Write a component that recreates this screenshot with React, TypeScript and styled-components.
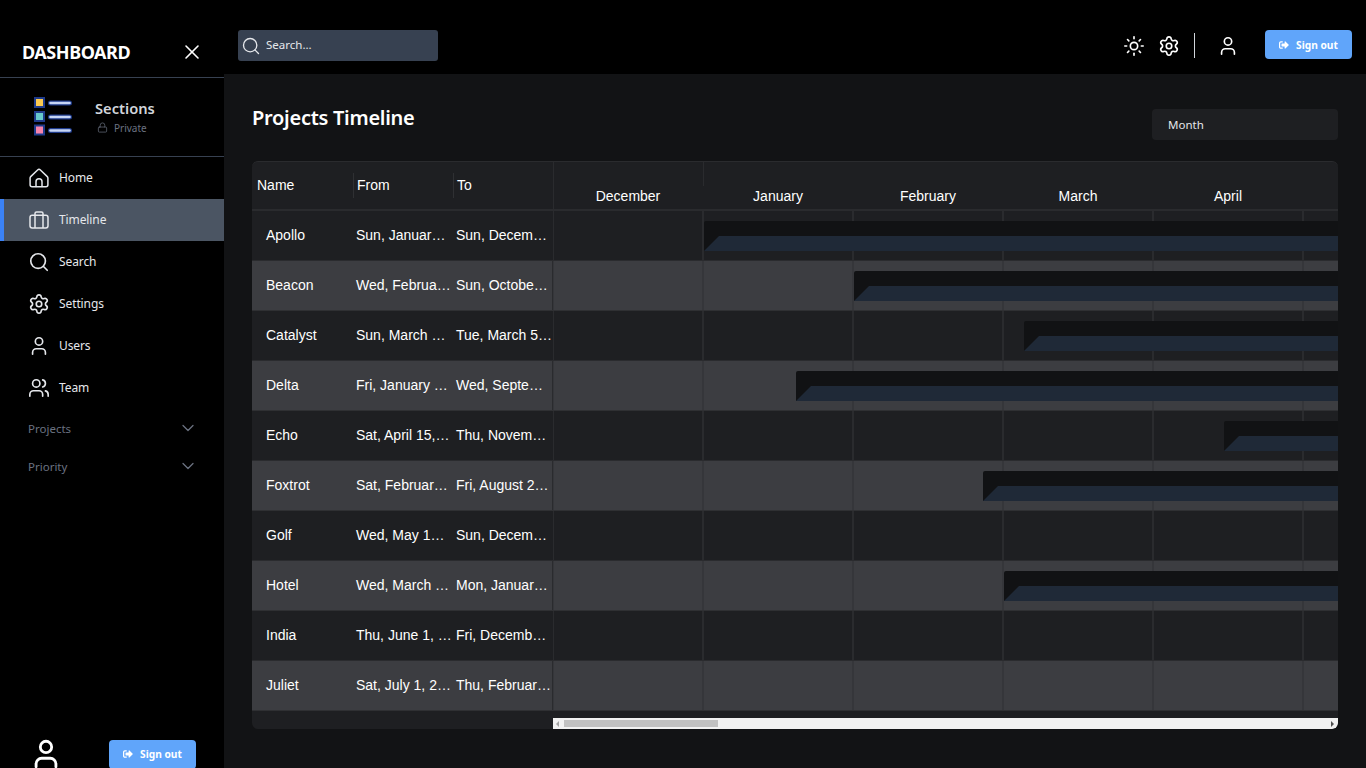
import React from "react";
import styled, { createGlobalStyle } from "styled-components";
import { Search, Settings, User, Users, Sun, X, ChevronDown, Lock } from "lucide-react";
import { FaSignOutAlt } from "react-icons/fa";

const Global = createGlobalStyle`
  html, body { margin: 0; padding: 0; height: 100%; background: #000; overflow: hidden; }
  * { box-sizing: border-box; }
`;

const UI_FONT = `"Noto Sans", "Open Sans", sans-serif`;
const TABLE_FONT = `"Liberation Sans", Arial, sans-serif`;

const Page = styled.div`
  display: flex;
  width: 1366px;
  height: 768px;
  overflow: hidden;
  font-family: ${UI_FONT};
`;

const Sidebar = styled.aside`
  width: 224px;
  height: 768px;
  flex: none;
  display: flex;
  flex-direction: column;
  background: #000;
  overflow: hidden;
`;

const Brand = styled.div`
  height: 78px;
  flex: none;
  display: flex;
  align-items: center;
  justify-content: space-between;
  padding: 27px 20px 0 22px;
  border-bottom: 1px solid #374151;
  color: #fff;
`;

const BrandName = styled.div`
  font-size: 18px;
  font-weight: 700;
  letter-spacing: -0.45px;
`;

const Sections = styled.div`
  height: 79px;
  flex: none;
  display: flex;
  align-items: center;
  gap: 21px;
  padding: 0 0 0 34px;
  border-bottom: 1px solid #374151;
`;

const SectionTitle = styled.div`
  font-size: 14.7px;
  font-weight: 600;
  line-height: 20px;
  margin-top: -1px;
  color: #d1d5db;
`;

const SectionSub = styled.div`
  display: flex;
  align-items: center;
  gap: 6px;
  margin: 2px 0 0 2px;
  font-size: 10px;
  line-height: 16px;
  color: #6b7280;
`;

const Nav = styled.nav`
  flex: 1;
  display: flex;
  flex-direction: column;
`;

const NavItem = styled.div<{ $active?: boolean }>`
  height: 42px;
  flex: none;
  display: flex;
  align-items: center;
  gap: 9px;
  padding-left: ${(p) => (p.$active ? 24 : 28)}px;
  border-left: ${(p) => (p.$active ? "4px solid #3b82f6" : "none")};
  background: ${(p) => (p.$active ? "#4b5563" : "transparent")};
  color: #e5e7eb;
  font-size: 12px;
  letter-spacing: -0.1px;
  svg { flex: none; }
`;

const NavLabel = styled.span`
  margin-top: -2px;
`;

const NavGroup = styled.div`
  height: 38px;
  flex: none;
  display: flex;
  align-items: center;
  justify-content: space-between;
  padding: 0 26px 0 28px;
  color: #6b7280;
  font-size: 11.5px;
`;

const SideFooter = styled.div`
  height: 28px;
  flex: none;
  display: flex;
  justify-content: space-between;
  padding: 0 28px 0 29px;
  color: #fff;
`;

const AvatarSlot = styled.div`
  margin-top: -3px;
`;

const SignOut = styled.button`
  width: 87px;
  height: 29px;
  flex: none;
  display: flex;
  align-items: center;
  justify-content: center;
  gap: 7px;
  border: none;
  border-radius: 4px;
  background: #60a5fa;
  color: #fff;
  font-family: ${UI_FONT};
  font-size: 10.2px;
  font-weight: 700;
  padding: 0 0 2px;
`;

const TopSignOut = styled(SignOut)`
  margin-top: -2px;
  padding: 0;
`;

const Right = styled.div`
  flex: 1;
  min-width: 0;
  display: flex;
  flex-direction: column;
`;

const Topbar = styled.header`
  height: 74px;
  flex: none;
  display: flex;
  align-items: center;
  justify-content: space-between;
  padding: 17px 14px 0 14px;
  background: #000;
  color: #fff;
`;

const SearchBox = styled.div`
  width: 200px;
  height: 31px;
  display: flex;
  align-items: center;
  gap: 5px;
  padding-left: 3px;
  background: #374151;
  border-radius: 3px;
  color: #e5e7eb;
  font-size: 11.5px;
`;

const SearchLabel = styled.span`
  margin-top: -2px;
`;

const TopActions = styled.div`
  display: flex;
  align-items: center;
`;

const TopIcon = styled.div<{ $gap: number }>`
  width: 22px;
  height: 22px;
  margin-right: ${(p) => p.$gap}px;
  display: flex;
  justify-content: center;
`;

const Divider = styled.div`
  width: 1px;
  height: 25px;
  margin-right: 22px;
  background: #d1d5db;
`;

const Main = styled.main`
  flex: 1;
  display: flex;
  flex-direction: column;
  padding: 0 28px;
  background: #121315;
`;

const TitleRow = styled.div`
  height: 87px;
  flex: none;
  display: flex;
  align-items: flex-start;
  justify-content: space-between;
`;

const Title = styled.h1`
  margin: 30px 0 0;
  font-size: 20px;
  line-height: 27px;
  font-weight: 600;
  letter-spacing: -0.28px;
  color: #fff;
`;

const MonthSelect = styled.div`
  width: 186px;
  height: 31px;
  margin-top: 35px;
  display: flex;
  align-items: center;
  padding-left: 16px;
  background: #1e1f22;
  border-radius: 4px;
  color: #e5e7eb;
  font-size: 11.5px;
`;

const Table = styled.section`
  height: 568px;
  flex: none;
  display: flex;
  flex-direction: column;
  background: #1e1f22;
  border-top: 1px solid #2a2b2e;
  border-radius: 6px;
  overflow: hidden;
  font-family: ${TABLE_FONT};
  font-size: 14px;
  color: #fff;
`;

const HeaderRow = styled.div`
  height: 49px;
  flex: none;
  display: flex;
  border-bottom: 2px solid #2a2b2e;
`;

const HeadCell = styled.div<{ $first?: boolean }>`
  width: ${(p) => (p.$first ? 101 : 100)}px;
  flex: none;
  align-self: center;
  height: 25px;
  margin-top: -1px;
  display: flex;
  align-items: center;
  padding-left: ${(p) => (p.$first ? 5 : 3)}px;
  border-left: ${(p) => (p.$first ? "none" : "1px solid #2f3033")};
`;

const MonthStrip = styled.div`
  flex: 1;
  display: flex;
  overflow: hidden;
  box-shadow: inset 1px 0 0 #2a2b2e;
`;

const MonthCell = styled.div<{ $tick?: boolean }>`
  width: 150px;
  flex: none;
  position: relative;
  display: flex;
  align-items: flex-end;
  justify-content: center;
  padding-bottom: 5px;
  &::before {
    content: "";
    display: ${(p) => (p.$tick ? "block" : "none")};
    position: absolute;
    left: 0;
    top: 0;
    width: 1px;
    height: 24px;
    background: #2a2b2e;
  }
`;

const Row = styled.div<{ $alt: boolean }>`
  height: 50px;
  flex: none;
  display: flex;
  background: ${(p) => (p.$alt ? "#3c3d41" : "#1e1f22")};
  border-bottom: 1px solid ${(p) => (p.$alt ? "#2f3033" : "#2a2b2e")};
`;

const NameCell = styled.div`
  width: 101px;
  flex: none;
  display: flex;
  align-items: center;
  padding: 0 0 2px 14px;
`;

const DateCell = styled.div`
  width: 100px;
  flex: none;
  padding: 0 1px 0 3px;
  margin-bottom: 2px;
  align-self: center;
  white-space: nowrap;
  overflow: hidden;
  text-overflow: ellipsis;
`;

const Track = styled.div<{ $alt: boolean }>`
  flex: 1;
  position: relative;
  display: flex;
  overflow: hidden;
  box-shadow: ${(p) => (p.$alt ? "-1px 0 0 #2a2b2e" : "none")};
  --grid: ${(p) => (p.$alt ? "#35363a" : "#2a2b2e")};
`;

const GridCol = styled.div`
  width: 150px;
  flex: none;
  border-left: 1px solid var(--grid);
  border-right: 1px solid var(--grid);
`;

const Bar = styled.div<{ $left: number }>`
  position: absolute;
  top: 10px;
  left: ${(p) => p.$left}px;
  right: 0;
  height: 30px;
  background: #111214;
  border-top-left-radius: 2px;
  &::after {
    content: "";
    position: absolute;
    left: 0;
    right: 0;
    bottom: 0;
    height: 15px;
    background: #1f2937;
    clip-path: polygon(15px 0, 100% 0, 100% 100%, 0 100%);
  }
`;

const ScrollRow = styled.div`
  flex: 1;
  display: flex;
  justify-content: flex-end;
  align-items: flex-end;
`;

const Scrollbar = styled.div`
  width: 785px;
  height: 11px;
  position: relative;
  display: flex;
  align-items: center;
  justify-content: space-between;
  padding: 0 4px 0 3px;
  background: #f1f1f1;
  border-bottom-right-radius: 5px;
`;

const Thumb = styled.div`
  position: absolute;
  left: 11px;
  top: 2px;
  width: 154px;
  height: 7px;
  background: #c1c1c1;
`;

const Arrow = styled.div<{ $dir: "left" | "right" }>`
  width: 0;
  height: 0;
  border-top: 3px solid transparent;
  border-bottom: 3px solid transparent;
  ${(p) =>
    p.$dir === "left"
      ? "border-right: 3px solid #a3a3a3;"
      : "border-left: 3px solid #505050;"}
`;

const HomeIcon = () => (
  <svg width="22" height="22" viewBox="-1 -1 22 22" fill="none" stroke="currentColor" strokeWidth="1.5" strokeLinejoin="round" strokeLinecap="round">
    <path d="M1.7 8.6 8.6 2a2 2 0 0 1 2.8 0l6.9 6.6c.4.4.6.9.6 1.4v6.7a2 2 0 0 1-2 2H3.1a2 2 0 0 1-2-2V10c0-.5.2-1 .6-1.4Z" />
    <path d="M7 18.6v-4.9a3 3 0 0 1 6 0v4.9" />
  </svg>
);

const CaseIcon = () => (
  <svg width="22" height="22" viewBox="-1 -1 22 22" fill="none" stroke="currentColor" strokeWidth="1.5" strokeLinejoin="round">
    <rect x="1" y="5.2" width="18" height="12.8" rx="2.2" />
    <path d="M6 18V3.6A1.6 1.6 0 0 1 7.6 2h4.8A1.6 1.6 0 0 1 14 3.6V18" />
  </svg>
);

const SectionsLogo = () => (
  <svg width="40" height="40" viewBox="0 0 40 40">
    <rect x="1" y="1" width="9" height="9" fill="#fbc94f" stroke="#1e3a8a" strokeWidth="2" />
    <rect x="1" y="15" width="9" height="9" fill="#67c8cc" stroke="#1e3a8a" strokeWidth="2" />
    <rect x="1" y="28.5" width="9" height="9" fill="#f783ac" stroke="#1e3a8a" strokeWidth="2" />
    {[6, 20, 33.5].map((y) => (
      <g key={y}>
        <line x1="16.5" x2="35.5" y1={y} y2={y} stroke="#1e3a8a" strokeWidth="5" strokeLinecap="round" />
        <line x1="16.5" x2="35.5" y1={y} y2={y} stroke="#c7d6f5" strokeWidth="2.6" strokeLinecap="round" />
      </g>
    ))}
  </svg>
);

const rows = [
  { name: "Apollo", from: "Sun, January 1, 2023", to: "Sun, December 31, 2023", bar: 151 },
  { name: "Beacon", from: "Wed, February 1, 2023", to: "Sun, October 1, 2023", bar: 301 },
  { name: "Catalyst", from: "Sun, March 5, 2023", to: "Tue, March 5, 2024", bar: 471 },
  { name: "Delta", from: "Fri, January 20, 2023", to: "Wed, September 20, 2023", bar: 243 },
  { name: "Echo", from: "Sat, April 15, 2023", to: "Thu, November 30, 2023", bar: 671 },
  { name: "Foxtrot", from: "Sat, February 25, 2023", to: "Fri, August 25, 2023", bar: 430 },
  { name: "Golf", from: "Wed, May 10, 2023", to: "Sun, December 31, 2023" },
  { name: "Hotel", from: "Wed, March 1, 2023", to: "Mon, January 1, 2024", bar: 451 },
  { name: "India", from: "Thu, June 1, 2023", to: "Fri, December 1, 2023" },
  { name: "Juliet", from: "Sat, July 1, 2023", to: "Thu, February 1, 2024" },
];

const months = ["December", "January", "February", "March", "April"];

const navItems = [
  { label: "Home", icon: <HomeIcon /> },
  { label: "Timeline", icon: <CaseIcon />, active: true },
  { label: "Search", icon: <Search size={22} strokeWidth={1.8} /> },
  { label: "Settings", icon: <Settings size={22} strokeWidth={1.8} /> },
  { label: "Users", icon: <User size={22} strokeWidth={1.8} /> },
  { label: "Team", icon: <Users size={22} strokeWidth={1.8} /> },
];

export default function App() {
  return (
    <Page>
      <Global />
      <Sidebar>
        <Brand>
          <BrandName>DASHBOARD</BrandName>
          <X size={24} strokeWidth={1.6} />
        </Brand>
        <Sections>
          <SectionsLogo />
          <div>
            <SectionTitle>Sections</SectionTitle>
            <SectionSub>
              <Lock size={11} strokeWidth={1.5} />
              Private
            </SectionSub>
          </div>
        </Sections>
        <Nav>
          {navItems.map((n) => (
            <NavItem key={n.label} $active={n.active}>
              {n.icon}
              <NavLabel>{n.label}</NavLabel>
            </NavItem>
          ))}
          <NavGroup>Projects<ChevronDown size={20} strokeWidth={1.5} /></NavGroup>
          <NavGroup>Priority<ChevronDown size={20} strokeWidth={1.5} /></NavGroup>
        </Nav>
        <SideFooter>
          <AvatarSlot><User size={34} strokeWidth={2} /></AvatarSlot>
          <SignOut><FaSignOutAlt size={10} />Sign out</SignOut>
        </SideFooter>
      </Sidebar>
      <Right>
        <Topbar>
          <SearchBox>
            <Search size={20} strokeWidth={1.6} />
            <SearchLabel>Search...</SearchLabel>
          </SearchBox>
          <TopActions>
            <TopIcon $gap={13}><Sun size={22} strokeWidth={1.8} /></TopIcon>
            <TopIcon $gap={14}><Settings size={22} strokeWidth={1.8} /></TopIcon>
            <Divider />
            <TopIcon $gap={26}><User size={22} strokeWidth={1.8} /></TopIcon>
            <TopSignOut><FaSignOutAlt size={10} />Sign out</TopSignOut>
          </TopActions>
        </Topbar>
        <Main>
          <TitleRow>
            <Title>Projects Timeline</Title>
            <MonthSelect>Month</MonthSelect>
          </TitleRow>
          <Table>
            <HeaderRow>
              <HeadCell $first>Name</HeadCell>
              <HeadCell>From</HeadCell>
              <HeadCell>To</HeadCell>
              <MonthStrip>
                {months.map((m, i) => (
                  <MonthCell key={m} $tick={i === 1}>{m}</MonthCell>
                ))}
              </MonthStrip>
            </HeaderRow>
            {rows.map((r, i) => (
              <Row key={r.name} $alt={i % 2 === 1}>
                <NameCell>{r.name}</NameCell>
                <DateCell>{r.from}</DateCell>
                <DateCell>{r.to}</DateCell>
                <Track $alt={i % 2 === 1}>
                  {[0, 1, 2, 3, 4, 5].map((c) => <GridCol key={c} />)}
                  {r.bar !== undefined && <Bar $left={r.bar} />}
                </Track>
              </Row>
            ))}
            <ScrollRow>
              <Scrollbar>
                <Arrow $dir="left" />
                <Thumb />
                <Arrow $dir="right" />
              </Scrollbar>
            </ScrollRow>
          </Table>
        </Main>
      </Right>
    </Page>
  );
}
